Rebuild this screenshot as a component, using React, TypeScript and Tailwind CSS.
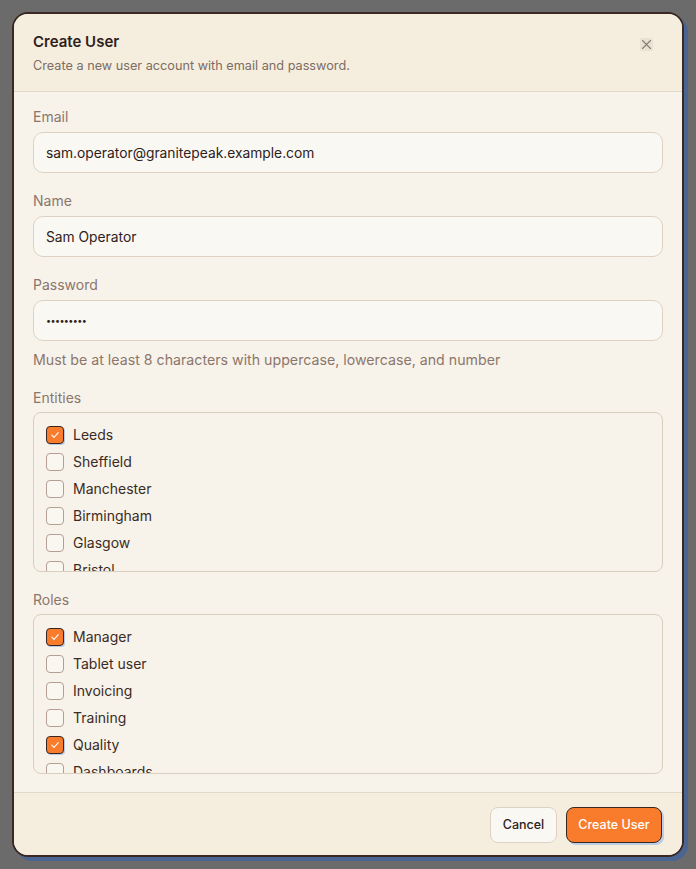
import React from "react";

const entities = [
  { name: "Leeds", checked: true },
  { name: "Sheffield", checked: false },
  { name: "Manchester", checked: false },
  { name: "Birmingham", checked: false },
  { name: "Glasgow", checked: false },
  { name: "Bristol", checked: false },
  { name: "Newcastle", checked: false },
];

const roles = [
  { name: "Manager", checked: true },
  { name: "Tablet user", checked: false },
  { name: "Invoicing", checked: false },
  { name: "Training", checked: false },
  { name: "Quality", checked: true },
  { name: "Dashboards", checked: false },
  { name: "Admin", checked: false },
];

function Check({ checked }: { checked: boolean }) {
  if (checked) {
    return (
      <span className="flex h-[18px] w-[18px] shrink-0 items-center justify-center rounded-[4px] border border-[#3a2620] bg-[#f97c2c] shadow-[1px_1px_0_#b7cbe6]">
        <svg width="10" height="10" viewBox="0 0 10 10" fill="none">
          <path d="M1.8 5.2 L4 7.3 L8.3 2.7" stroke="#ffffff" strokeWidth="1.1" strokeLinecap="round" strokeLinejoin="round" />
        </svg>
      </span>
    );
  }
  return <span className="h-[18px] w-[18px] shrink-0 rounded-[4px] border border-[#b59e94] bg-[#faf7f1]" />;
}

function CheckList({ items }: { items: { name: string; checked: boolean }[] }) {
  return (
    <div className="mt-[4px] h-[160px] overflow-hidden rounded-[8px] border border-[#d9cfbf] px-3 pt-[12px]">
      <div className="flex flex-col gap-[7px]">
        {items.map((it) => (
          <label key={it.name} className="flex h-5 items-center gap-[9px]">
            <Check checked={it.checked} />
            <span className="text-[14px] leading-5 text-[#3b2b25]">{it.name}</span>
          </label>
        ))}
      </div>
    </div>
  );
}

function Field({ label, value, type }: { label: string; value: string; type?: string }) {
  return (
    <div className="flex flex-col">
      <span className="text-[14px] leading-5 text-[#8c766c]">{label}</span>
      <div className="mt-[5px] flex h-[41px] items-center rounded-[10px] border border-[#ddd2c1] bg-[#faf8f2] px-[12px]">
        <span
          className={
            type === "password"
              ? "text-[9px] leading-5 tracking-[-0.6px] text-[#2e211c]"
              : "text-[13.8px] leading-5 text-[#2e211c]"
          }
        >
          {value}
        </span>
      </div>
    </div>
  );
}

export default function App() {
  return (
    <div
      className="flex h-[869px] w-full items-start justify-center bg-[#6b6b6b] pt-3"
      style={{ fontFamily: "Inter, 'Noto Sans', sans-serif" }}
    >
      <div className="flex h-[845px] w-[672px] flex-col overflow-hidden rounded-[16px] border-2 border-[#3a2822] bg-[#f7f3ea] shadow-[4px_4px_0_#4a6592]">
        <div className="relative border-b border-[#e2d9ca] bg-[#f5eedf] px-[19px] pb-4 pt-4">
          <h2 className="text-[15px] font-semibold leading-6 text-[#2e211c]">Create User</h2>
          <p className="mt-[3px] text-[12.7px] leading-[18px] text-[#7d6c63]">
            Create a new user account with email and password.
          </p>
          <button className="absolute right-[29px] top-[24px] flex h-[13px] w-[13px] items-center justify-center rounded-[2px] bg-[#e9e1d3]">
            <svg width="11" height="11" viewBox="0 0 11 11" fill="none">
              <path d="M1.5 1.5 L9.5 9.5 M9.5 1.5 L1.5 9.5" stroke="#8a7b72" strokeWidth="1.1" strokeLinecap="round" />
            </svg>
          </button>
        </div>

        <div className="flex flex-1 flex-col gap-[18px] overflow-hidden px-[19px] pt-[15px]">
          <Field label="Email" value="sam.operator@granitepeak.example.com" />
          <Field label="Name" value="Sam Operator" />
          <div className="flex flex-col">
            <Field label="Password" value="•••••••••" type="password" />
            <p className="mt-[9px] text-[14.2px] leading-5 text-[#8c766c]">
              Must be at least 8 characters with uppercase, lowercase, and number
            </p>
          </div>
          <div className="flex flex-col">
            <span className="text-[14px] leading-5 text-[#8c766c]">Entities</span>
            <CheckList items={entities} />
          </div>
          <div className="flex flex-col">
            <span className="text-[14px] leading-5 text-[#8c766c]">Roles</span>
            <CheckList items={roles} />
          </div>
        </div>

        <div className="flex justify-end gap-[9px] border-t border-[#e2d9ca] bg-[#f5eedf] px-[20px] pb-3 pt-[14px]">
          <button className="flex h-[36px] w-[67px] items-center justify-center rounded-[8px] border border-[#ddd2c1] bg-[#faf8f2] text-[12.5px] font-medium text-[#2e211c]">
            Cancel
          </button>
          <button className="flex h-[36px] w-[96px] items-center justify-center rounded-[8px] border border-[#3a2620] bg-[#f97c2c] text-[12.5px] font-medium text-white shadow-[2px_2px_0_#bccde6]">
            Create User
          </button>
        </div>
      </div>
    </div>
  );
}
